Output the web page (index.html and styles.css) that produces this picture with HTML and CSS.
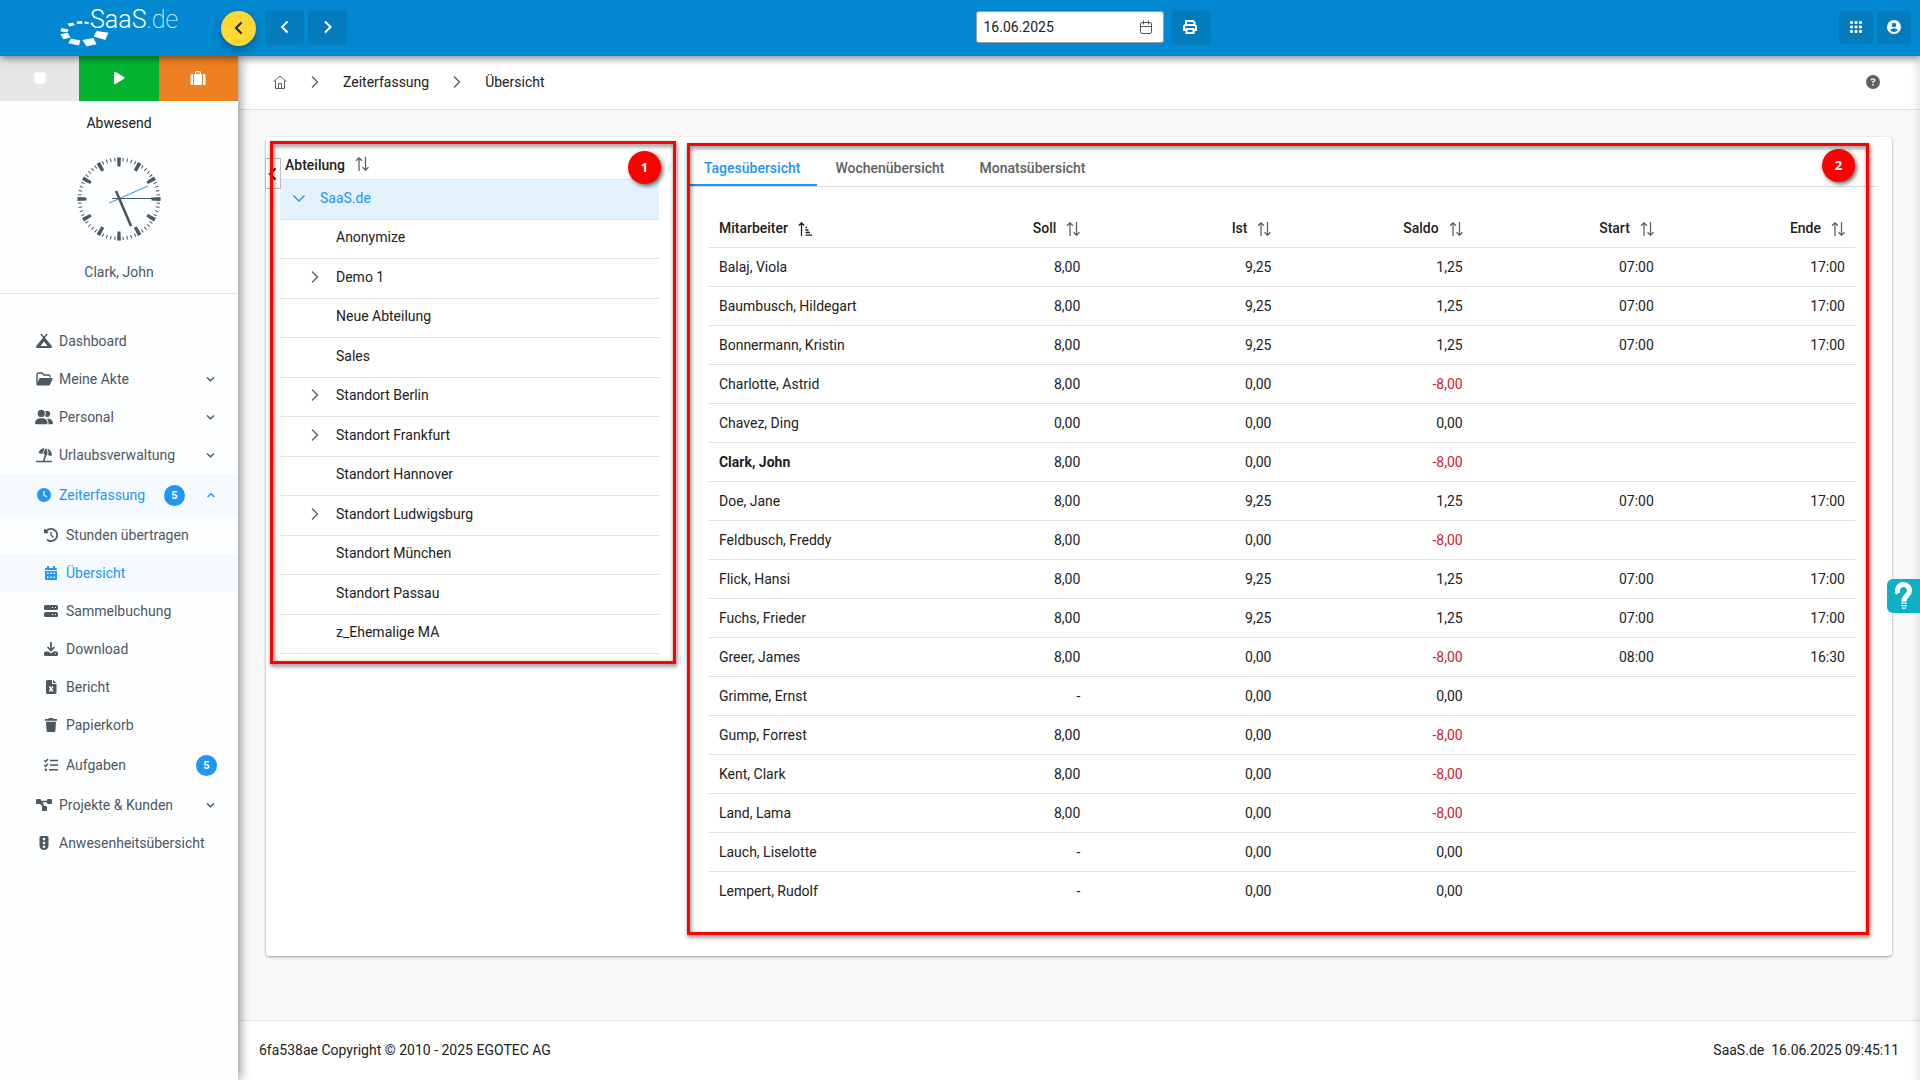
FILE: index.html
```html
<!DOCTYPE html>
<html lang="de">
<head>
  <meta charset="UTF-8">
  <meta name="viewport" content="width=device-width, initial-scale=1.0">
  <title>SaaS.de - Übersicht</title>
  <link rel="stylesheet" href="styles.css">
</head>
<body>

<!-- shared icons -->
<svg class="sprite" aria-hidden="true">
  <symbol id="sort" viewBox="0 0 14 14"><path d="M4 14V.8M1 3.800l3-3 3 3M10.500 0v13.200M7.500 10.200l3 3 3-3"/></symbol>
  <symbol id="left" viewBox="0 0 14 14"><path d="M9.500 1.500L4 7l5.500 5.500"/></symbol>
  <symbol id="right" viewBox="0 0 14 14"><path d="M4 1.500L9.500 7 4 12.500"/></symbol>
  <symbol id="down" viewBox="0 0 14 14"><path d="M1.500 4.500L7 10l5.500-5.500"/></symbol>
  <symbol id="small-down" viewBox="0 0 14 14"><path d="M4 5.500l3.500 3.300L11 5.500"/></symbol>
  <symbol id="small-up" viewBox="0 0 14 14"><path d="M4.500 9L8 5.700 11.500 9"/></symbol>
</svg>

<header class="topbar">
  <a class="logo" href="#" aria-label="SaaS.de">
    <svg width="122" height="44" viewBox="61 5 122 44">
      <g fill="#fff">
        <path d="M97.500 30l12 1.800-3.300 7.200-11.500-3.400z"/>
        <path d="M83.500 39l11-2 3 6.300-10 2z"/>
        <path d="M72 37.500l9.300 2-1.300 5-10.700-2.300z"/>
        <path d="M61.500 33.300l7-1.600 3 4.800-7 1.800z"/>
        <path d="M62.500 27l7.200 1.500-1.200 2.800-7-.7z"/>
        <path d="M68.500 22.500l5.500-.8 2 2.400-5.300 1.600z"/>
        <path d="M77.500 20.500l5.500-.5.300 2.700-5 .4z"/>
        <path d="M85.500 20.600l4.500.6-.7 2.100-3.800-.7z"/>
        <path d="M91.500 22l3 1-.5 1.400-2.500-.8z"/>
      </g>
      <text x="91" y="27" class="logo-text">SaaS<tspan class="logo-thin">.de</tspan></text>
    </svg>
  </a>
  <button class="toggle" aria-label="Menü einklappen"><svg class="line" width="14" height="14"><use href="#left"/></svg></button>
  <div class="topbar-row">
    <div class="group">
      <button class="tool" aria-label="Zurück"><svg class="line" width="14" height="14"><use href="#left"/></svg></button>
      <button class="tool" aria-label="Weiter"><svg class="line" width="14" height="14"><use href="#right"/></svg></button>
    </div>
    <div class="date-group">
      <div class="date">
        <input type="text" value="16.06.2025" aria-label="Datum">
        <button aria-label="Kalender öffnen">
          <svg class="line thin" width="14" height="14" viewBox="0 0 14 14"><rect x="1.500" y="2.500" width="11" height="11" rx="1.500"/><path d="M1.500 6.500h11M4.500.500v4M9.500.500v4"/></svg>
        </button>
      </div>
      <button class="tool" aria-label="Drucken">
        <svg class="line print" width="16" height="16" viewBox="0 0 16 16"><path d="M4 6V2h7l1.500 1.500V6M4 11H2V8q0-2 2-2h8q2 0 2 2v3h-2"/><rect x="4.500" y="10" width="7" height="4"/></svg>
      </button>
    </div>
    <div class="group end">
      <button class="tool small" aria-label="Apps">
        <svg width="14" height="14" viewBox="0 0 14 14" fill="#fff"><rect x="1" y="1" width="3" height="3" rx="1"/><rect x="5.500" y="1" width="3" height="3" rx="1"/><rect x="10" y="1" width="3" height="3" rx="1"/><rect x="1" y="5.500" width="3" height="3" rx="1"/><rect x="5.500" y="5.500" width="3" height="3" rx="1"/><rect x="10" y="5.500" width="3" height="3" rx="1"/><rect x="1" y="10" width="3" height="3" rx="1"/><rect x="5.500" y="10" width="3" height="3" rx="1"/><rect x="10" y="10" width="3" height="3" rx="1"/></svg>
      </button>
      <button class="tool small" aria-label="Benutzer">
        <svg width="14" height="14" viewBox="0 0 14 14"><circle cx="7" cy="7" r="7" fill="#fff"/><circle cx="7" cy="5" r="2.200" fill="#037bbd"/><path d="M3 10q4-3.500 8 0-4 4-8 0z" fill="#037bbd"/></svg>
      </button>
    </div>
  </div>
</header>

<div class="layout">
  <aside class="sidebar">
    <div class="punch">
      <button class="stop" aria-label="Gehen"><svg width="12" height="12" viewBox="0 0 12 12"><rect x=".5" y=".5" width="11" height="11" rx="2"/></svg></button>
      <button class="play" aria-label="Kommen"><svg width="12" height="14" viewBox="0 0 12 14"><path d="M1 2q0-1.500 1.500-1L11 6q1 .8 0 1.800L2.500 13Q1 13.500 1 12z"/></svg></button>
      <button class="trip" aria-label="Dienstreise"><svg width="16" height="14" viewBox="0 0 16 14"><path d="M5 3V1.500Q5 0 6.500 0h3Q11 0 11 1.500V3h1v11H4V3zm1.200 0h3.600V1.200H6.200zM3 3v11H2q-1.500 0-1.500-1.500v-8Q.500 3 2 3zM13 3v11h1q1.500 0 1.500-1.500v-8Q15.500 3 14 3z"/></svg></button>
    </div>
    <div class="person">
      <div class="state">Abwesend</div>
      <svg class="clock" width="84" height="84" viewBox="-42 -42 84 84">
        <circle class="ticks" r="39.500" stroke-width="3.500" pathLength="360" stroke-dasharray="1.500 4.500" stroke-dashoffset=".75"/>
        <circle class="ticks" r="37" stroke-width="9" pathLength="360" stroke-dasharray="5.400 24.600" stroke-dashoffset="2.700"/>
        <path d="M-10 4L29-13" stroke="#42a5f5" stroke-width="1.200"/>
        <path d="M-7-.5H41" stroke="#455a64" stroke-width="1.200"/>
        <path d="M-3-8L12 27" stroke="#4b5761" stroke-width="2.600"/>
      </svg>
      <div class="name">Clark, John</div>
    </div>
    <nav class="menu">
      <a href="#"><svg class="ico" viewBox="0 0 18 16"><path d="M6.300.5L9 3.500 11.700.5l1 .9L10 4.800l6.800 8.200q.7 2-1 2H2.200q-1.700 0-1-2L8 4.800 5.300 1.400zM9 8.500L5.500 13h7z"/></svg>Dashboard</a>
      <a href="#"><svg class="ico" viewBox="0 0 18 16"><path d="M2 13.500V3.500q0-1.500 1.500-1.500H7l2 2h4.500Q15 4 15 5.500V6.500" fill="none" stroke="currentColor" stroke-width="1.400"/><path d="M5 7h12q1 0 .5 1.200L15 13.500q-.4 1-1.500 1H1.500L4 8q.3-1 1-1z"/></svg>Meine Akte<svg class="line arrow"><use href="#small-down"/></svg></a>
      <a href="#"><svg class="ico" viewBox="0 0 640 512"><path d="M96 128a128 128 0 1 1 256 0A128 128 0 1 1 96 128zM0 482.300C0 383.800 79.800 304 178.300 304h91.400C368.200 304 448 383.800 448 482.300c0 16.400-13.300 29.700-29.700 29.700H29.700C13.300 512 0 498.700 0 482.300zM609.300 512H471.400c5.400-9.400 8.600-20.300 8.600-32v-8c0-60.700-27.100-115.200-69.800-151.800c2.400-.1 4.700-.2 7.100-.2h61.400C567.800 320 640 392.200 640 481.300c0 17-13.800 30.700-30.700 30.700zM432 256c-31 0-59-12.600-79.300-32.900C372.400 196.500 384 163.600 384 128c0-26.800-6.600-52.100-18.300-74.300C384.300 40.100 407.200 32 432 32c61.900 0 112 50.100 112 112s-50.100 112-112 112z"/></svg>Personal<svg class="line arrow"><use href="#small-down"/></svg></a>
      <a href="#"><svg class="ico" viewBox="0 0 18 16"><path d="M3.500 6Q5 1.500 9.500 1L7.500 7zM8.500 7.300Q9 3 11 1.200q2 2 1.200 7.300zM13.200 8.600q.8-4.500-.9-7.100Q17 3.500 17 8.800z"/><path d="M10.500 8L8.800 14M1 14.500h16" fill="none" stroke="currentColor" stroke-width="1.600"/></svg>Urlaubsverwaltung<svg class="line arrow"><use href="#small-down"/></svg></a>
      <a href="#" class="tall active"><svg class="ico square" viewBox="0 0 512 512"><path d="M256 0a256 256 0 1 1 0 512A256 256 0 1 1 256 0zM232 120V256c0 8 4 15.500 10.700 20l96 64c11 7.400 25.900 4.400 33.300-6.700s4.400-25.900-6.700-33.300L280 243.200V120c0-13.300-10.700-24-24-24s-24 10.700-24 24z"/></svg>Zeiterfassung<span class="badge">5</span><svg class="line arrow"><use href="#small-up"/></svg></a>
      <a href="#" class="sub"><svg class="ico square" viewBox="0 0 512 512"><path d="M75 75L41 41C25.900 25.900 0 36.600 0 57.900V168c0 13.300 10.700 24 24 24H134.100c21.400 0 32.100-25.900 17-41l-30.800-30.800C155 85.500 203 64 256 64c106 0 192 86 192 192s-86 192-192 192c-40.800 0-78.600-12.700-109.700-34.400c-14.500-10.100-34.400-6.600-44.600 7.900s-6.600 34.400 7.900 44.600C151.200 495 201.700 512 256 512c141.400 0 256-114.600 256-256S397.400 0 256 0C185.300 0 121.300 28.700 75 75zm181 53c-13.300 0-24 10.700-24 24V256c0 6.400 2.500 12.500 7 17l72 72c9.400 9.400 24.600 9.400 33.900 0s9.400-24.600 0-33.900l-65-65V152c0-13.300-10.700-24-24-24z"/></svg>Stunden übertragen</a>
      <a href="#" class="sub active"><svg class="ico square" viewBox="0 0 14 14"><path fill-rule="evenodd" d="M3 0h2v2h4V0h2v2h1q1 0 1 1v1H1V3q0-1 1-1h1zM1 5h12v8q0 1-1 1H2q-1 0-1-1zM3 6.500v1.500h1.500V6.500zM6.200 6.500v1.500h1.600V6.500zM9.500 6.500v1.500H11V6.500zM3 10.500V12h1.500v-1.500zM6.200 10.500V12h1.600v-1.500zM9.500 10.500V12H11v-1.500z"/></svg>Übersicht</a>
      <a href="#" class="sub"><svg class="ico square" viewBox="0 0 14 14"><path fill-rule="evenodd" d="M1.500 1h11Q14 1 14 2.500v2Q14 6 12.500 6h-11Q0 6 0 4.500v-2Q0 1 1.500 1zM8 3v1h1V3zM11 3v1h1V3zM1.500 8h11Q14 8 14 9.500v2q0 1.500-1.500 1.500h-11Q0 13 0 11.500v-2Q0 8 1.500 8zM8 10v1h1v-1zM11 10v1h1v-1z"/></svg>Sammelbuchung</a>
      <a href="#" class="sub"><svg class="ico square" viewBox="0 0 14 14"><path d="M7 0v8.500M3.500 5L7 8.500 10.500 5" fill="none" stroke="currentColor" stroke-width="1.700"/><path fill-rule="evenodd" d="M1.500 9.500h3L7 11.500l2.500-2h3Q14 9.500 14 11v1.500q0 1.500-1.500 1.500h-11Q0 14 0 12.500V11q0-1.500 1.500-1.500zM11 11.200v1h1v-1z"/></svg>Download</a>
      <a href="#" class="sub"><svg class="ico square" viewBox="0 0 14 14"><path d="M3.500 0H8v4h4.500v8.500Q12.500 14 11 14H3.500Q2 14 2 12.500v-11Q2 0 3.500 0zM9 0l3.500 3H9z"/><path d="M5.300 6.500l3.600 5M8.900 6.500l-3.600 5" stroke="#fdfeff" stroke-width="1.400"/></svg>Bericht</a>
      <a href="#" class="sub"><svg class="ico square" viewBox="0 0 14 14"><path d="M5 0h4l.6 1H13v1.700H1V1h3.400zM2 3.700h10l-.6 9q-.1 1.300-1.400 1.300H4q-1.300 0-1.400-1.300z"/></svg>Papierkorb</a>
      <a href="#" class="sub tall"><svg class="ico square" viewBox="0 0 14 14"><path d="M.3 2.500l1.200 1.200L4 1M.3 7.200l1.200 1.200L4 5.700M6 2.500h8M6 7h8M5 11.800h9" fill="none" stroke="currentColor" stroke-width="1.500"/><circle cx="1.800" cy="11.800" r="1.200"/></svg>Aufgaben<span class="badge">5</span></a>
      <a href="#"><svg class="ico" viewBox="0 0 18 16"><path d="M2 2h3q1 0 1 1v.7h6V3q0-1 1-1h3q1 0 1 1v3q0 1-1 1h-3q-1 0-1-1v-.7H7.500L9.300 9H11q1 0 1 1v3q0 1-1 1H8q-1 0-1-1v-3l.4-.7L5.300 7H2Q1 7 1 6V3q0-1 1-1z"/></svg>Projekte &amp; Kunden<svg class="line arrow"><use href="#small-down"/></svg></a>
      <a href="#"><svg class="ico square" viewBox="0 0 14 14"><path fill-rule="evenodd" d="M4 0h6q1.500 0 1.500 1.500V9.500a4.500 4.500 0 0 1-9 0V1.500Q2.500 0 4 0zM7 1.800a1.300 1.300 0 1 0 0 2.600 1.300 1.300 0 1 0 0-2.600zM7 5.700a1.300 1.300 0 1 0 0 2.600 1.300 1.300 0 1 0 0-2.600zM7 9.500a1.300 1.300 0 1 0 0 2.600 1.300 1.300 0 1 0 0-2.600z"/></svg>Anwesenheitsübersicht</a>
    </nav>
  </aside>

  <main class="main">
    <div class="breadcrumb">
      <a href="#" aria-label="Start"><svg class="line thin" width="14" height="14" viewBox="0 0 14 14"><path d="M.5 6.500L7 1l6.500 5.500M2.500 5.500v8h9v-8M5.500 13.500v-5h3v5"/></svg></a>
      <svg class="line" width="14" height="14"><use href="#right"/></svg>
      <a href="#">Zeiterfassung</a>
      <svg class="line" width="14" height="14"><use href="#right"/></svg>
      <a href="#">Übersicht</a>
      <button class="help" aria-label="Hilfe"><svg width="14" height="14" viewBox="0 0 512 512"><path d="M256 512A256 256 0 1 0 256 0a256 256 0 1 0 0 512zM169.800 165.300c7.900-22.300 29.100-37.300 52.800-37.300h58.300c34.900 0 63.100 28.300 63.100 63.100c0 22.600-12.100 43.500-31.700 54.800L280 264.400c-.2 13-10.900 23.600-24 23.600c-13.300 0-24-10.700-24-24V250.500c0-8.600 4.600-16.500 12.100-20.800l44.300-25.400c4.700-2.700 7.600-7.700 7.600-13.100c0-8.400-6.800-15.100-15.100-15.100H222.600c-3.400 0-6.400 2.100-7.500 5.300l-.4 1.200c-4.400 12.500-18.200 19-30.600 14.600s-19-18.200-14.600-30.600l.4-1.200zM224 352a32 32 0 1 1 64 0 32 32 0 1 1 -64 0z"/></svg></button>
    </div>

    <div class="content">
      <div class="card">
        <section class="departments">
          <table class="tree">
            <thead>
              <tr><th>Abteilung<svg class="line sort"><use href="#sort"/></svg></th></tr>
            </thead>
            <tbody>
              <tr class="selected"><td><div class="node"><button aria-label="Zuklappen"><svg class="line" width="14" height="14"><use href="#down"/></svg></button>SaaS.de</div></td></tr>
              <tr><td><div class="node child leaf">Anonymize</div></td></tr>
              <tr><td><div class="node child"><button aria-label="Aufklappen"><svg class="line" width="14" height="14"><use href="#right"/></svg></button>Demo 1</div></td></tr>
              <tr><td><div class="node child leaf">Neue Abteilung</div></td></tr>
              <tr><td><div class="node child leaf">Sales</div></td></tr>
              <tr><td><div class="node child"><button aria-label="Aufklappen"><svg class="line" width="14" height="14"><use href="#right"/></svg></button>Standort Berlin</div></td></tr>
              <tr><td><div class="node child"><button aria-label="Aufklappen"><svg class="line" width="14" height="14"><use href="#right"/></svg></button>Standort Frankfurt</div></td></tr>
              <tr><td><div class="node child leaf">Standort Hannover</div></td></tr>
              <tr><td><div class="node child"><button aria-label="Aufklappen"><svg class="line" width="14" height="14"><use href="#right"/></svg></button>Standort Ludwigsburg</div></td></tr>
              <tr><td><div class="node child leaf">Standort München</div></td></tr>
              <tr><td><div class="node child leaf">Standort Passau</div></td></tr>
              <tr><td><div class="node child leaf">z_Ehemalige MA</div></td></tr>
            </tbody>
          </table>
          <div class="frame"></div>
          <span class="marker">1</span>
        </section>

        <section class="overview">
          <div class="tabs" role="tablist">
            <button role="tab" class="active" aria-selected="true">Tagesübersicht</button>
            <button role="tab">Wochenübersicht</button>
            <button role="tab">Monatsübersicht</button>
          </div>
          <div class="panel">
            <table class="times">
              <thead>
                <tr>
                  <th>Mitarbeiter<svg class="line sort dark" viewBox="0 0 14 14"><path d="M3.500 14V.8M.8 3.500L3.500.8l2.700 2.700M7.500 5.500h1.500M7.500 8h3M7.500 10.500h4.500M7.500 13.200h6.500"/></svg></th>
                  <th>Soll<svg class="line sort"><use href="#sort"/></svg></th>
                  <th>Ist<svg class="line sort"><use href="#sort"/></svg></th>
                  <th>Saldo<svg class="line sort"><use href="#sort"/></svg></th>
                  <th>Start<svg class="line sort"><use href="#sort"/></svg></th>
                  <th>Ende<svg class="line sort"><use href="#sort"/></svg></th>
                </tr>
              </thead>
              <tbody>
                <tr><td>Balaj, Viola</td><td>8,00</td><td>9,25</td><td>1,25</td><td>07:00</td><td>17:00</td></tr>
                <tr><td>Baumbusch, Hildegart</td><td>8,00</td><td>9,25</td><td>1,25</td><td>07:00</td><td>17:00</td></tr>
                <tr><td>Bonnermann, Kristin</td><td>8,00</td><td>9,25</td><td>1,25</td><td>07:00</td><td>17:00</td></tr>
                <tr><td>Charlotte, Astrid</td><td>8,00</td><td>0,00</td><td class="minus">-8,00</td><td></td><td></td></tr>
                <tr><td>Chavez, Ding</td><td>0,00</td><td>0,00</td><td>0,00</td><td></td><td></td></tr>
                <tr><td class="me">Clark, John</td><td>8,00</td><td>0,00</td><td class="minus">-8,00</td><td></td><td></td></tr>
                <tr><td>Doe, Jane</td><td>8,00</td><td>9,25</td><td>1,25</td><td>07:00</td><td>17:00</td></tr>
                <tr><td>Feldbusch, Freddy</td><td>8,00</td><td>0,00</td><td class="minus">-8,00</td><td></td><td></td></tr>
                <tr><td>Flick, Hansi</td><td>8,00</td><td>9,25</td><td>1,25</td><td>07:00</td><td>17:00</td></tr>
                <tr><td>Fuchs, Frieder</td><td>8,00</td><td>9,25</td><td>1,25</td><td>07:00</td><td>17:00</td></tr>
                <tr><td>Greer, James</td><td>8,00</td><td>0,00</td><td class="minus">-8,00</td><td>08:00</td><td>16:30</td></tr>
                <tr><td>Grimme, Ernst</td><td>-</td><td>0,00</td><td>0,00</td><td></td><td></td></tr>
                <tr><td>Gump, Forrest</td><td>8,00</td><td>0,00</td><td class="minus">-8,00</td><td></td><td></td></tr>
                <tr><td>Kent, Clark</td><td>8,00</td><td>0,00</td><td class="minus">-8,00</td><td></td><td></td></tr>
                <tr><td>Land, Lama</td><td>8,00</td><td>0,00</td><td class="minus">-8,00</td><td></td><td></td></tr>
                <tr><td>Lauch, Liselotte</td><td>-</td><td>0,00</td><td>0,00</td><td></td><td></td></tr>
                <tr><td>Lempert, Rudolf</td><td>-</td><td>0,00</td><td>0,00</td><td></td><td></td></tr>
              </tbody>
            </table>
          </div>
          <div class="frame"></div>
          <span class="marker">2</span>
        </section>

        <button class="collapse" aria-label="Abteilungen einklappen"><svg class="line" width="14" height="14"><use href="#left"/></svg></button>
      </div>
    </div>

    <footer class="footer">
      <span>6fa538ae Copyright © 2010 - 2025 EGOTEC AG</span>
      <span class="stamp"><span>SaaS.de</span><span>16.06.2025 09:45:11</span></span>
    </footer>
  </main>
</div>

<button class="support" aria-label="Support">
  <svg width="20" height="28" viewBox="0 0 20 28"><path d="M4.200 11.500A6 6 0 1 1 13.500 13Q10 15.500 10 19.500" fill="none" stroke="#fff" stroke-width="5"/><path d="M7 20.500h6v1.300H7zM7 23h6v1.300H7zM8 25.500h4v1.300H8z" fill="#fff"/></svg>
</button>

</body>
</html>
```
FILE: styles.css
```css
* {
  box-sizing: border-box;
}

body {
  margin: 0;
  min-height: 100vh;
  display: flex;
  flex-direction: column;
  background: #fafafa;
  color: #212121;
  font-family: Roboto, 'Liberation Sans', sans-serif;
  font-size: 14px;
  line-height: 20px;
}

a {
  color: inherit;
  text-decoration: none;
}

button {
  border: none;
  padding: 0;
  background: none;
  color: inherit;
  font: inherit;
  cursor: pointer;
}

svg {
  display: block;
  flex: none;
}

.sprite {
  display: none;
}

.line {
  fill: none;
  stroke: currentColor;
  stroke-width: 1.4;
}

.thin {
  stroke-width: 1;
  color: #555;
}

/* top bar */
.topbar {
  position: relative;
  z-index: 3;
  display: flex;
  align-items: center;
  height: 56px;
  background: #0288d1;
  box-shadow: 0 2px 8px rgba(0, 0, 0, 0.5);
}

.logo {
  width: 221px;
  padding-left: 60px;
}

.logo-text {
  fill: #fff;
  font-size: 25px;
  font-weight: 300;
}

.logo-thin {
  font-weight: 100;
}

.toggle {
  display: flex;
  align-items: center;
  justify-content: center;
  width: 35px;
  height: 35px;
  margin-right: 9px;
  border-radius: 50%;
  background: #fdd835;
  box-shadow: 0 4px 10px rgba(0, 0, 0, 0.3);
}

.toggle .line,
.tool .line {
  stroke-width: 2;
}

.topbar-row {
  flex: 1;
  display: grid;
  grid-template-columns: 1fr auto 1fr;
  align-items: center;
  padding-bottom: 2px;
}

.group {
  display: flex;
  gap: 4px;
}

.end {
  justify-content: flex-end;
  margin-right: 9px;
}

.tool {
  display: flex;
  align-items: center;
  justify-content: center;
  width: 39px;
  height: 35px;
  border-radius: 4px;
  background: #037bbd;
  color: #fff;
}

.small {
  width: 34px;
  height: 33px;
}

.date-group {
  display: flex;
  align-items: center;
  gap: 7px;
}

.date {
  display: flex;
  align-items: center;
  width: 188px;
  height: 32px;
  padding: 0 10px 0 7px;
  background: #fff;
  border: 1px solid #9e9e9e;
  border-radius: 3px;
}

.date input {
  flex: 1;
  min-width: 0;
  border: none;
  padding: 0;
  outline: none;
  color: inherit;
  font: inherit;
}

/* sidebar */
.layout {
  flex: 1;
  display: flex;
}

.sidebar {
  position: relative;
  z-index: 2;
  width: 238px;
  flex: none;
  background: #fdfeff;
  color: #4b5761;
  box-shadow: 0 0 12px rgba(0, 0, 0, 0.6);
}

.punch {
  display: grid;
  grid-template-columns: 1fr 1fr 1fr;
  height: 45px;
}

.punch button {
  display: flex;
  align-items: center;
  justify-content: center;
  padding-bottom: 2px;
  fill: #fff;
}

.stop { background: #e6e6e6; }
.play { background: #04b431; }
.trip { background: #ee8023; }

.person {
  display: flex;
  flex-direction: column;
  align-items: center;
  padding: 12px 0 11px;
  border-bottom: 1px solid #dee2e6;
}

.state {
  color: #212121;
}

.clock {
  margin: 24px 0 21px;
}

.ticks {
  fill: none;
  stroke: #4b5761;
}

.menu {
  padding-top: 28px;
}

.menu a {
  display: flex;
  align-items: center;
  height: 38px;
  padding: 0 21px 0 35px;
}

.menu .sub {
  padding-left: 42px;
}

.menu .tall {
  height: 42px;
}

.menu .active {
  background: #f4faff;
  color: #2196f3;
}

.ico {
  width: 18px;
  height: 16px;
  margin-right: 6px;
  fill: currentColor;
}

.square {
  height: 14px;
}

.arrow {
  width: 14px;
  height: 14px;
  margin-left: auto;
}

.badge {
  width: 21px;
  margin-left: auto;
  border-radius: 50%;
  background: #2196f3;
  color: #fff;
  font-size: 11px;
  font-weight: 700;
  line-height: 21px;
  text-align: center;
}

.badge + .arrow {
  margin-left: 18px;
}

/* main area */
.main {
  position: relative;
  flex: 1;
  min-width: 0;
  display: flex;
  flex-direction: column;
}

.main::after {
  content: '';
  position: absolute;
  top: 0;
  right: 0;
  bottom: 0;
  width: 10px;
  background: linear-gradient(to right, transparent, rgba(0, 0, 0, 0.08));
}

.breadcrumb {
  display: flex;
  align-items: center;
  gap: 21px;
  height: 54px;
  padding: 0 40px 2px 35px;
  background: #fff;
  border-bottom: 1px solid #e2e2e2;
}

.breadcrumb .line {
  color: #616161;
}

.help {
  margin-left: auto;
  fill: #616161;
}

.content {
  flex: 1;
  padding: 27px 28px;
}

.card {
  position: relative;
  display: grid;
  grid-template-columns: 7fr 22fr;
  gap: 28px;
  padding: 0 14px;
  background: #fff;
  border-radius: 4px;
  box-shadow: 0 1px 3px rgba(0, 0, 0, 0.4);
}

.collapse {
  position: absolute;
  z-index: 1;
  top: 21px;
  left: -1px;
  display: flex;
  align-items: center;
  justify-content: center;
  width: 16px;
  height: 31px;
  border: 1px solid #bbb;
}

.collapse .line {
  stroke-width: 2;
}

.departments,
.overview {
  position: relative;
}

table {
  width: 100%;
  border-collapse: separate;
  border-spacing: 0;
}

th {
  padding: 0;
  font-weight: 500;
}

td {
  padding: 0;
}

.sort {
  display: inline-block;
  width: 14px;
  height: 14px;
  margin-left: 10px;
  vertical-align: -3px;
  stroke-width: 1.3;
  color: #616161;
}

.dark {
  color: #212121;
}

.tree {
  height: 517px;
}

.tree th {
  height: 43px;
  padding: 14px 6px 0 5px;
  border-bottom: 1px solid #e0e0e0;
  text-align: left;
}

.tree .sort {
  vertical-align: -1px;
}

.tree td {
  border-bottom: 1px solid #e0e0e0;
}

.node {
  display: flex;
  align-items: center;
  padding: 0 6px 3px 5px;
}

.node button {
  display: flex;
  justify-content: center;
  width: 28px;
  margin-right: 7px;
  color: #616161;
}

.child {
  padding-left: 21px;
}

.leaf {
  padding-left: 56px;
}

.selected,
.selected .node button {
  background: #e3f2fd;
  color: #2196f3;
}

/* tabs and times */
.tabs {
  display: flex;
  gap: 1px;
  height: 50px;
  padding-top: 12px;
  border-bottom: 1px solid #dcdcdc;
}

.tabs button {
  padding: 2px 17px 0;
  border-bottom: 2px solid transparent;
  color: #616161;
  font-weight: 500;
}

.tabs .active {
  border-color: #2196f3;
  color: #2196f3;
}

.panel {
  padding: 20px 22px 45px;
}

.times {
  table-layout: fixed;
}

.times th,
.times td {
  height: 39px;
  padding: 0 11px;
  border-bottom: 1px solid #e0e0e0;
  text-align: right;
}

.times th {
  height: 41px;
  padding-top: 2px;
}

.times th:first-child,
.times td:first-child {
  padding-left: 10px;
  text-align: left;
}

.times tbody tr:last-child td {
  border-color: transparent;
}

.me {
  font-weight: 700;
}

.minus {
  color: #c9202e;
}

/* red annotations */
.frame {
  position: absolute;
  z-index: 2;
  border: 3px solid #f00;
  filter: drop-shadow(1px 2px 2px rgba(0, 0, 0, 0.6));
  pointer-events: none;
}

.departments .frame {
  top: 4px;
  right: -17px;
  left: -10px;
  height: 523px;
}

.overview .frame {
  top: 6px;
  right: 9px;
  bottom: 21px;
  left: 0;
}

.marker {
  position: absolute;
  z-index: 2;
  top: 14px;
  right: -2px;
  width: 33px;
  border-radius: 50%;
  background: #f00;
  box-shadow: 2px 2px 4px rgba(0, 0, 0, 0.6);
  color: #fff;
  font-family: 'Open Sans', sans-serif;
  font-size: 13px;
  font-weight: 700;
  line-height: 33px;
  text-align: center;
}

.overview .marker {
  top: 12px;
  right: 23px;
}

.footer {
  display: flex;
  justify-content: space-between;
  padding: 19px 21px 20px;
  background: #fff;
  border-top: 1px solid #e8e8e8;
}

.stamp {
  display: flex;
  gap: 7px;
}

.support {
  position: fixed;
  z-index: 4;
  top: 579px;
  right: 0;
  display: flex;
  align-items: center;
  justify-content: center;
  width: 33px;
  height: 34px;
  border-radius: 6px 0 0 6px;
  background: #0eb0c5;
}
```
